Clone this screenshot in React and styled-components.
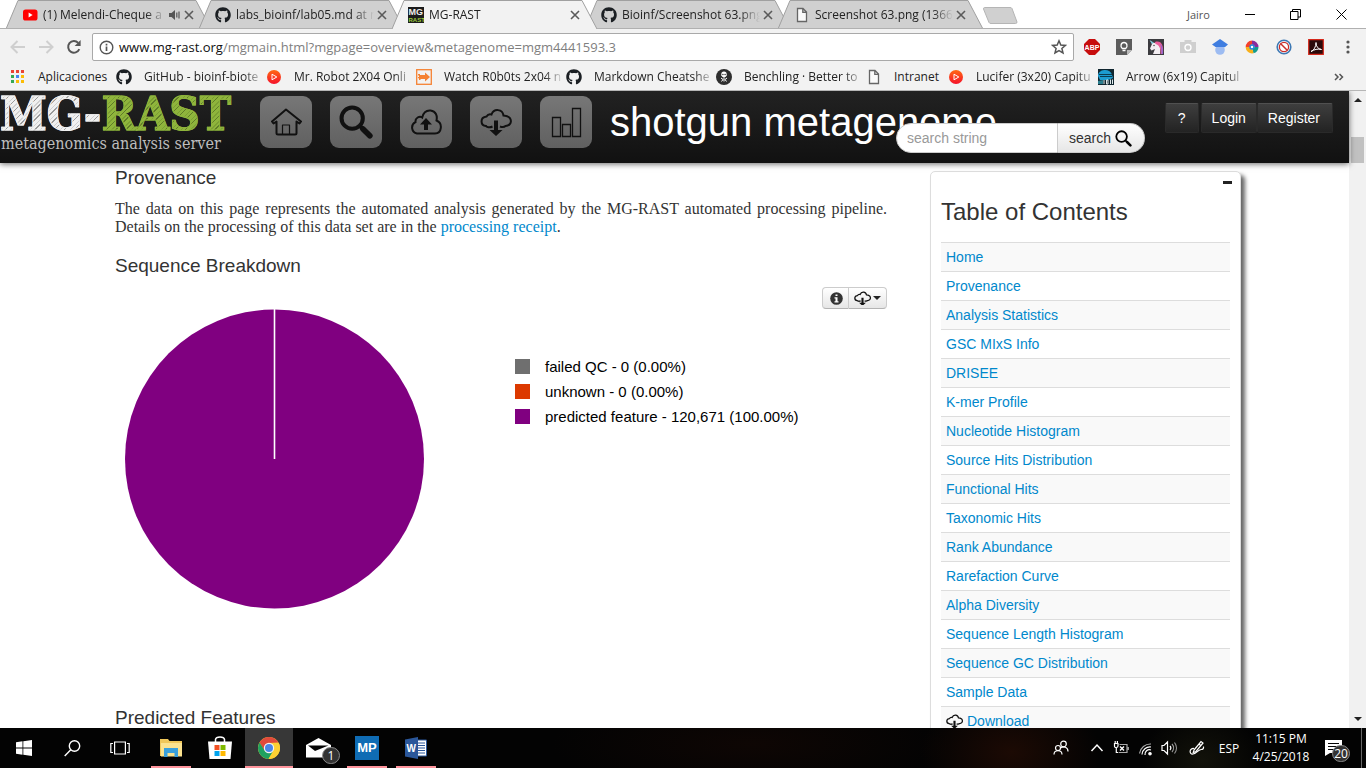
import React from "react";
import styled, { createGlobalStyle, css } from "styled-components";
import { FaGithub } from "react-icons/fa";

const ui = `"Open Sans", "Noto Sans", sans-serif`;
const sans = `"Liberation Sans", Arial, sans-serif`;
const slab = `"DejaVu Serif Condensed", "DejaVu Serif", serif`;

const Global = createGlobalStyle`
  * { box-sizing: border-box; }
  html, body { margin: 0; height: 100%; overflow: hidden; background: #fff; }
  button, input { font: inherit; color: inherit; margin: 0; }
  button { border: 0; padding: 0; background: none; }
  ul { list-style: none; margin: 0; padding: 0; }
  h1, h2, h3, p { margin: 0; font-weight: normal; }
  a { text-decoration: none; }
  svg { display: block; flex: none; }
`;

const Screen = styled.div`
  display: flex;
  flex-direction: column;
  height: 100vh;
  font-family: ${ui};
  font-size: 12px;
`;

/* ---------- browser frame ---------- */

const TabStrip = styled.div`
  display: flex;
  align-items: flex-start;
  height: 29px;
  padding-left: 6px;
  border-bottom: 1px solid #b0b0b0;
  background: #fff;
`;

const TabBox = styled.div`
  position: relative;
  display: flex;
  align-items: center;
  flex: 0 0 205px;
  min-width: 0;
  height: 29px;
  margin-right: -12px;
  padding: 0 17px 0 16px;
  z-index: ${(p) => (p.$active ? 2 : 1)};
`;

const TabShape = styled.svg`
  position: absolute;
  inset: 0;
`;

const TabIcon = styled.span`
  position: relative;
  display: flex;
  width: 16px;
  margin-right: 5px;
`;

const fade = css`
  overflow: hidden;
  white-space: nowrap;
  mask-image: linear-gradient(to right, #000 calc(100% - 20px), transparent);
`;

const TabTitle = styled.span`
  position: relative;
  flex: 1 1 0;
  min-width: 0;
  color: #222;
  line-height: 28px;
  ${fade}
`;

const TabButton = styled.button`
  position: relative;
  display: flex;
  flex: none;
  margin-left: 3px;
  color: #5a5a5a;
`;

const NewTab = styled.button`
  width: 36px;
  margin: 6px 0 0 11px;
`;

const WindowControls = styled.div`
  display: flex;
  align-items: center;
  height: 28px;
  margin-left: auto;
  padding-right: 19px;
  gap: 35px;
`;

const UserName = styled.span`
  font-size: 11px;
  color: #555;
`;

const ToolBar = styled.div`
  display: flex;
  align-items: center;
  height: 36px;
  padding: 0 10px;
  background: #f2f2f2;
`;

const NavButtons = styled.div`
  display: flex;
  gap: 12px;
  margin-right: 10px;
`;

const NavButton = styled.button`
  display: flex;
  width: 16px;
  color: ${(p) => (p.$off ? "#cfcfcf" : "#555")};
`;

const Omnibox = styled.div`
  display: flex;
  align-items: center;
  flex: 1;
  height: 28px;
  padding: 0 6px;
  margin-right: 10px;
  border: 1px solid #a9a9a9;
  border-radius: 2px;
  background: #fff;
`;

const Url = styled.div`
  flex: 1;
  margin-left: 5px;
  font-size: 13px;
  line-height: 24px;
  color: #808080;
  b { font-weight: normal; color: #111; }
`;

const Extensions = styled.div`
  display: flex;
  gap: 16px;
`;

const Bookmarks = styled.nav`
  display: flex;
  align-items: center;
  height: 26px;
  padding: 0 22px 2px 10px;
  gap: 12px;
  border-bottom: 1px solid #b6b6b6;
  background: #f2f2f2;
`;

const Bookmark = styled.a`
  display: flex;
  align-items: center;
  gap: 12px;
  color: #222;
  line-height: 20px;
`;

const longLabel = css`
  width: 120px;
  margin-right: -10px;
  ${fade}
`;

const BookmarkLabel = styled.span`
  width: ${(p) => p.$width}px;
  white-space: nowrap;
  ${(p) => !p.$width && longLabel}
`;

const More = styled.button`
  margin-left: auto;
  display: flex;
`;

/* ---------- web page ---------- */

const Viewport = styled.div`
  display: flex;
  flex: 1;
  min-height: 0;
  overflow: hidden;
`;

const Page = styled.div`
  display: flex;
  flex-direction: column;
  flex: 1;
  min-width: 0;
  font-family: ${sans};
  font-size: 14px;
  color: #333;
`;

const Header = styled.header`
  position: relative;
  z-index: 2;
  display: flex;
  flex: none;
  height: 72px;
  padding-right: 16px;
  background: linear-gradient(#222, #111);
  box-shadow: 0 1px 6px rgba(0, 0, 0, 0.6);
`;

const Logo = styled.a`
  display: flex;
  flex-direction: column;
  flex: 0 0 260px;
  font-family: ${slab};
  white-space: nowrap;
`;

const LogoName = styled.span`
  font-size: 47px;
  font-weight: bold;
  line-height: 46px;
`;

const LogoPart = styled.span`
  color: transparent;
  -webkit-text-stroke: 1px ${(p) => p.$light};
  background: repeating-linear-gradient(
    135deg,
    ${(p) => p.$light} 0 3px,
    ${(p) => p.$mid} 3px 4px,
    ${(p) => p.$light} 4px 6px,
    ${(p) => p.$dark} 6px 7px
  );
  background-clip: text;
  -webkit-background-clip: text;
`;

const LogoTag = styled.span`
  padding-left: 1px;
  font-size: 16px;
  line-height: 14px;
  color: #bdbdbd;
`;

const MainNav = styled.nav`
  display: flex;
  gap: 18px;
  padding-top: 5px;
`;

const IconButton = styled.button`
  display: flex;
  align-items: center;
  justify-content: center;
  width: 52px;
  height: 52px;
  border-radius: 9px;
  background: linear-gradient(#777, #606060);
  color: #111;
`;

const Title = styled.h1`
  margin-left: 18px;
  font-size: 40px;
  line-height: 62px;
  color: #fff;
  white-space: nowrap;
`;

const Search = styled.form`
  position: absolute;
  right: 204px;
  top: 32px;
  display: flex;
  width: 249px;
  height: 30px;
`;

const SearchInput = styled.input`
  flex: 1;
  min-width: 0;
  padding: 0 10px;
  border: 1px solid #ccc;
  border-radius: 15px 0 0 15px;
  background: #fff;
  outline: 0;
  &::placeholder { color: #999; opacity: 1; }
`;

const SearchButton = styled.button`
  display: flex;
  align-items: center;
  gap: 4px;
  padding: 0 12px 0 11px;
  border: 1px solid #ccc;
  border-left: 0;
  border-radius: 0 15px 15px 0;
  background: linear-gradient(#fff, #e6e6e6);
  svg { color: #000; }
`;

const Account = styled.div`
  display: flex;
  height: 30px;
  margin: 12px 0 0 auto;
`;

const AccountButton = styled.button`
  padding: 0 10px;
  border: 1px solid #2a2a2a;
  border-top-color: #505050;
  border-radius: 2px;
  background: linear-gradient(#3e3e3e, #232323);
  color: #fff;
  &:first-child { padding: 0 12px; margin-right: 2px; }
  &:last-child { padding-right: 12px; }
`;

const Content = styled.div`
  display: grid;
  grid-template-columns: minmax(0, 1fr) 311px;
  gap: 43px;
  flex: 1;
  min-height: 0;
  padding: 0 108px 0 115px;
  overflow: hidden;
`;

const Article = styled.main`
  padding-top: 5px;
`;

const SectionTitle = styled.h2`
  font-size: 19px;
  line-height: 20px;
`;

const Paragraph = styled.p`
  margin: 12px 0 20px;
  font-family: "Liberation Serif", "Times New Roman", serif;
  font-size: 16px;
  line-height: 18px;
  text-align: justify;
`;

const Link = styled.a`
  color: #0088cc;
`;

const ChartTools = styled.div`
  display: flex;
  justify-content: flex-end;
  margin-top: 11px;
`;

const ToolButton = styled.button`
  display: flex;
  align-items: center;
  gap: 2px;
  height: 22px;
  padding: 0 5px 0 ${(p) => (p.$last ? 5 : 7)}px;
  border: 1px solid #ccc;
  border-left-width: ${(p) => (p.$last ? 0 : 1)}px;
  border-bottom-color: #b3b3b3;
  border-radius: ${(p) => (p.$last ? "0 4px 4px 0" : "4px 0 0 4px")};
  background: linear-gradient(#fff, #e6e6e6);
  color: #111;
`;

const Chart = styled.section`
  display: flex;
  gap: 90px;
  min-height: 399px;
  padding-left: 10px;
`;

const Legend = styled.ul`
  padding-top: 45px;
  font-size: 15px;
  line-height: 25px;
  color: #000;
`;

const LegendItem = styled.li`
  display: flex;
  align-items: center;
  gap: 15px;
  &::before {
    content: "";
    width: 15px;
    height: 15px;
    background: ${(p) => p.$color};
  }
`;

const Toc = styled.aside`
  margin-top: 8px;
  padding: 0 10px 10px;
  height: max-content;
  border: 1px solid #ddd;
  border-radius: 5px;
  background: #fff;
  box-shadow: 4px 4px 4px #666;
`;

const Collapse = styled.button`
  display: block;
  width: 9px;
  height: 3px;
  margin: 9px -2px 0 auto;
  background: #222;
`;

const TocTitle = styled.h3`
  padding: 8px 0 10px;
  font-size: 24px;
  line-height: 40px;
`;

const TocItem = styled.li`
  border-top: 1px solid #ddd;
  padding: 4px 5px;
  line-height: 20px;
  &:nth-child(odd) { background: #f9f9f9; }
  a { display: flex; align-items: center; gap: 4px; }
  svg { color: #111; }
`;

const ScrollTrack = styled.div`
  display: flex;
  flex-direction: column;
  align-items: center;
  width: 17px;
  padding: 7px 0;
  background: #f1f1f1;
`;

const ScrollThumb = styled.div`
  width: 13px;
  height: 26px;
  margin: 35px 0 auto;
  background: #c1c1c1;
`;

/* ---------- task bar ---------- */

const TaskBar = styled.footer`
  display: flex;
  flex: none;
  height: 40px;
  color: #fff;
  background:
    radial-gradient(ellipse 90px 60px at 74% 60%, #1c0a04, transparent),
    radial-gradient(ellipse 60px 50px at 88% 80%, #12120a, transparent),
    radial-gradient(ellipse 200px 50px at 55% 40%, #0e0604, transparent),
    #030303;
`;

const TaskGroup = styled.div`
  display: flex;
  gap: ${(p) => p.$gap || 0}px;
  margin-left: ${(p) => p.$start || 0}px;
`;

const TaskButton = styled.button`
  position: relative;
  display: flex;
  align-items: center;
  justify-content: center;
  width: 48px;
  height: 40px;
  background: ${(p) => (p.$active ? "#373737" : "none")};
  &::after {
    content: "";
    position: absolute;
    bottom: 0;
    left: ${(p) => (p.$active ? 0 : 4)}px;
    right: ${(p) => (p.$active ? 0 : 4)}px;
    height: 2px;
    background: ${(p) => (p.$open || p.$active ? "#ff949c" : "none")};
  }
`;

const Badge = styled.span`
  position: absolute;
  left: ${(p) => p.$left}px;
  top: ${(p) => p.$top}px;
  min-width: 18px;
  height: 17px;
  border: 1px solid #8a8a8a;
  border-radius: 9px;
  background: #333;
  font-size: 12px;
  line-height: 15px;
  text-align: center;
`;

const Tile = styled.span`
  width: 24px;
  height: 24px;
  background: #0f6cb4;
  font: bold 13px/24px ${sans};
`;

const Tray = styled.div`
  display: flex;
  align-items: center;
  margin-left: auto;
`;

const TrayButton = styled.button`
  display: flex;
  justify-content: center;
  width: 24px;
  margin-right: ${(p) => p.$after || 0}px;
`;

const Clock = styled.time`
  width: 64px;
  margin: 0 3px 0 8px;
  text-align: center;
  line-height: 18px;
  white-space: nowrap;
`;

const Notifications = styled.button`
  position: relative;
  display: flex;
  align-items: flex-start;
  width: 46px;
  height: 40px;
  padding: 12px 0 0 9px;
  border-right: 1px solid #666;
  margin-right: 4px;
`;

/* ---------- drawings ---------- */

const CloseX = () => (
  <svg width="10" height="10" viewBox="0 0 10 10" stroke="currentColor" strokeWidth="1.6">
    <path d="M1 1l8 8M9 1l-8 8" />
  </svg>
);
const YouTube = () => (
  <svg width="16" height="16" viewBox="0 0 16 16">
    <rect x="1" y="2.5" width="14.5" height="11" rx="2.6" fill="#f00" />
    <path d="M6.6 5.6v4.8l4-2.4z" fill="#fff" />
  </svg>
);
const PageIcon = () => (
  <svg width="16" height="16" viewBox="0 0 16 16" fill="#fafafa" stroke="#666" strokeWidth="1.3">
    <path d="M3.5 1.5h5.5l3.5 3.6v9.4h-9zM8.8 1.5v3.8h3.7" />
  </svg>
);
const RastIcon = () => (
  <svg width="16" height="16" viewBox="0 0 16 16" fontFamily="Liberation Sans" fontWeight="bold">
    <rect width="16" height="16" fill="#1b1b1b" />
    <text x="0.5" y="8" fontSize="9" fill="#eee">MG</text>
    <text x="0.5" y="15" fontSize="6" fill="#9aca3c">RAST</text>
  </svg>
);
const Apps = () => (
  <svg width="16" height="16" viewBox="0 0 16 16">
    {["#ea4335", "#ea4335", "#ea4335", "#34a853", "#4285f4", "#fbbc05", "#34a853", "#fbbc05", "#fbbc05"].map((c, i) => (
      <rect key={i} x={1 + (i % 3) * 5} y={1 + Math.floor(i / 3) * 5} width="3" height="3" fill={c} />
    ))}
  </svg>
);
const PlayDot = () => (
  <svg width="16" height="16" viewBox="0 0 16 16">
    <defs>
      <linearGradient id="dot" x1="0" y1="0" x2="0" y2="1">
        <stop stopColor="#ff6a13" />
        <stop offset="1" stopColor="#f5112b" />
      </linearGradient>
    </defs>
    <circle cx="8" cy="8" r="7" fill="url(#dot)" />
    <path d="M6 5.2v5.6L10.8 8z" fill="none" stroke="#fff" strokeWidth="1" />
  </svg>
);
const OrangeArrow = () => (
  <svg width="16" height="16" viewBox="0 0 16 16">
    <rect x=".7" y=".7" width="14.6" height="14.6" fill="none" stroke="#f58233" strokeWidth="1.3" />
    <path d="M2 5h2v1h5V3.500L14 8l-5 4.500V10H4.500v1H3V9.200H2V8h1V6.500H2z" fill="#f58233" />
  </svg>
);
const Benchling = () => (
  <svg width="16" height="16" viewBox="0 0 16 16">
    <circle cx="8" cy="8" r="8" fill="#2e2e2e" />
    <path d="M5.300 5a2.700 2.500 0 0 1 5.400 0v1.500L9.500 8h-3L5.300 6.500z" fill="#fff" />
    <path d="M5 9l2 1.500-1.500 2M11 9l-2 1.500 1.500 2M8 8v4.500" stroke="#fff" fill="none" />
    <circle cx="6.900" cy="5.500" r=".7" fill="#2e2e2e" />
    <circle cx="9.100" cy="5.500" r=".7" fill="#2e2e2e" />
  </svg>
);
const ArrowShow = () => (
  <svg width="16" height="16" viewBox="0 0 16 16">
    <rect width="16" height="16" fill="#10262f" />
    <path d="M0 7a7 5.500 0 0 1 14-1l1 3-5 2H2z" fill="#1c9cd0" />
    <path d="M1 5.500h13M2 7.500h12" stroke="#0a3c50" />
    <path d="M0 12l5-1v4H0z" fill="#2b7f90" />
    <path d="M6 11v4M8.500 11v4h1.500v-4H8.500M12.500 10.500v4.500M14.500 10.500v4.500" fill="none" stroke="#dfe8ea" />
  </svg>
);
const Back = ({ flip }) => (
  <svg width="16" height="16" viewBox="0 0 16 16" fill="none" stroke="currentColor" strokeWidth="2">
    <path d={flip ? "M1 8h13M8.500 2l6 6-6 6" : "M15 8H2M7.500 2l-6 6 6 6"} />
  </svg>
);
const Reload = () => (
  <svg width="16" height="16" viewBox="0 0 16 16" fill="none" stroke="currentColor" strokeWidth="2">
    <path d="M13.300 10.200A5.800 5.800 0 1 1 12.200 3.900" />
    <path d="M14.600 1v6H8.600z" fill="currentColor" stroke="none" />
  </svg>
);
const InfoRing = () => (
  <svg width="15" height="15" viewBox="0 0 15 15" fill="none" stroke="#555" strokeWidth="1.400">
    <circle cx="7.500" cy="7.500" r="6.300" />
    <path d="M7.500 6.500v4.500M7.500 3.800v1.600" strokeWidth="1.700" />
  </svg>
);
const Star = () => (
  <svg width="16" height="16" viewBox="0 0 16 16" fill="none" stroke="#555" strokeWidth="1.500">
    <path d="M8 1.800l1.800 4.200 4.600.4-3.500 3 1.100 4.500L8 11.500l-4 2.400 1.100-4.500-3.500-3 4.600-.4z" />
  </svg>
);
const extIcons = [
  <g key="a"><path d="M5 0h6l5 5v6l-5 5H5l-5-5V5z" fill="#c70d0d" /><text x="8" y="10.700" fontSize="7" fontWeight="bold" fontFamily="Liberation Sans" textAnchor="middle" fill="#fff">ABP</text></g>,
  <g key="b"><path d="M0 0h16v11l-5 5H0z" fill="#5c5c5c" /><path d="M11 16v-5h5z" fill="#bbb" /><path d="M6.300 9.500C4 7.500 4.800 3.500 8 3.500s4 4 1.700 6z" fill="none" stroke="#fff" strokeWidth="1.300" /><path d="M6.500 11.500h3" stroke="#fff" strokeWidth="1.500" /></g>,
  <g key="c"><path d="M0 0h16v16H0z" fill="#3b3b3f" /><path d="M2 1.500l4 2.500c4-2 7 1 6 11H5l2-5-3.500 1.500-1.500-2L4 5z" fill="#f3eef2" /><path d="M7 3c6-2 9 3 8 12h-2.500c.5-5-1-9-5-10z" fill="#ec5d9a" /><path d="M12 5c3 2 3 6 3 10h-1.500c0-4 0-7-1.500-10z" fill="#8c6bd0" /><path d="M1.500 1l4 2.500L4.200 5z" fill="#6cc5d8" /><circle cx="6" cy="6.500" r=".7" fill="#333" /></g>,
  <g key="d"><path d="M0 3h4.500V1h7v2H16v11H0z" fill="#cfcfcf" /><circle cx="8" cy="8.500" r="3" fill="none" stroke="#fff" strokeWidth="1.400" /></g>,
  <g key="e"><circle cx="8" cy="11" r="4.800" fill="#9dbcf2" /><path d="M8 0l8 5.500-3.500 3v-.5H3.500L0 5.500z" fill="#3f7de0" /></g>,
  <g key="f" fill="none" strokeWidth="4"><path d="M3.700 8A4.500 4.500 0 0 1 8 3.500" stroke="#f4402c" /><path d="M8 3.500A4.500 4.500 0 0 1 12.500 8" stroke="#8b2b9b" /><path d="M12.500 8A4.500 4.500 0 0 1 9 12.300" stroke="#139c8e" /><path d="M9 12.300A4.500 4.500 0 0 1 3.600 8" stroke="#f8b01a" /><circle cx="8" cy="8" r="2" fill="#fff" stroke="#2384d6" strokeWidth="1.500" /></g>,
  <g key="g"><circle cx="8" cy="8" r="6.800" fill="#fff" stroke="#3c78b4" strokeWidth="1.600" /><circle cx="8" cy="8" r="4.600" fill="none" stroke="#c9302c" strokeWidth="1.300" /><path d="M4.500 4.500l7 7" stroke="#c9302c" strokeWidth="1.500" /></g>,
  <g key="h"><path d="M.7.700h14.600v14.600H.7z" fill="#2b0a0a" stroke="#d5281b" strokeWidth="1.200" /><path d="M3 12.500c3-1 5-5 5-9 0 4 2 6.500 5.500 7-4-1-7 0-10.500 2z" fill="none" stroke="#fff" strokeWidth="1" /></g>,
];
const Speaker = () => (
  <svg width="12" height="12" viewBox="0 0 12 12" fill="#555">
    <path d="M0 4h2.500L6 1v10L2.500 8H0z" />
    <path d="M7.800 3.500v5M10 2.500v7" stroke="#555" strokeWidth="1.200" />
  </svg>
);
const Magnifier = ({ size, width = 1.6 }) => (
  <svg width={size} height={size} viewBox="0 0 16 16" fill="none" stroke="currentColor">
    <circle cx="6.200" cy="6.200" r="5" strokeWidth={width} />
    <path d="M10 10l1.500 1.500" strokeWidth={width} />
    <path d="M11.300 11.300l3.200 3.200" strokeWidth={width * 1.4} strokeLinecap="round" />
  </svg>
);
const House = () => (
  <svg width="32" height="32" viewBox="0 0 32 32" fill="none" stroke="currentColor" strokeWidth="2" strokeLinejoin="round">
    <path d="M16 3.500L2 15.500l1.500 2L6.500 15.500V27q0 1.500 1.500 1.500h17q1.500 0 1.500-1.500V15.500l3 2 1.500-2z" />
    <path d="M12.500 28v-9h7v9" strokeWidth="1.200" />
  </svg>
);
const CloudUp = () => (
  <svg width="32" height="26" viewBox="0 0 32 26" fill="none" stroke="currentColor" strokeWidth="2">
    <path d="M7 24.500A6 6 0 0 1 5.500 13.200C5 9 9.500 6.500 12.200 8.500 13.500 3 17 1.200 20.500 1.500 26 2 27.500 7 26.500 11.500 33 14 32 24.500 25 24.500z" />
    <path d="M16 9l6 6.500h-4V21h-4v-5.500h-4z" fill="currentColor" stroke="none" />
  </svg>
);
const CloudDown = ({ size = 32, width = 2 }) => (
  <svg width={size} height={(size * 28) / 32} viewBox="0 0 32 28" fill="none" stroke="currentColor" strokeWidth={width}>
    <path d="M12.500 18.500c-3 1.500-6 .5-6.500-.5-5.500-.5-6.500-8.500.5-9.500C8 6 10 6 11.500 6.500 14 0 22.500 1 23.500 7.500 33 8 33 17.500 25.500 18c-1.500 1.500-3 1.500-5.500.5" />
    <path d="M14 12.500h4V22h4.500L16 28l-6.500-6H14z" fill="currentColor" stroke="none" />
  </svg>
);
const Bars = () => (
  <svg width="32" height="32" viewBox="0 0 32 32" fill="none" stroke="currentColor" strokeWidth="1.300">
    <path d="M2.500 11.500h8v19h-8zM12.500 18.500h8v12h-8zM22.500 2.500h8v28h-8z" />
  </svg>
);
const InfoDot = () => (
  <svg width="13" height="13" viewBox="0 0 13 13">
    <circle cx="6.500" cy="6.500" r="6.300" fill="#333" />
    <path d="M5.500 2.500h2v1.600h-2zM4.500 5.200h3v4h1v1.200h-4V9.200h1V6.400h-1z" fill="#fff" />
  </svg>
);
const Caret = ({ up, width = 8 }) => (
  <svg width={width} height={width / 2} viewBox="0 0 8 4">
    <path d={up ? "M0 4l4-4 4 4z" : "M0 0l4 4 4-4z"} fill="#222" />
  </svg>
);
const Pie = () => (
  <svg width="300" height="300" viewBox="0 0 300 300">
    <circle cx="149.500" cy="150" r="149.500" fill="#800080" />
    <path d="M149.500 150V0" stroke="#fff" strokeWidth="1.600" />
  </svg>
);
const Win = () => (
  <svg width="16" height="16" viewBox="0 0 16 16" fill="#fff">
    <path d="M0 2.200L6.500 1.300v6.200H0zM7.300 1.200L16 0v7.500H7.300zM0 8.400h6.500v6.300L0 13.800zM7.300 8.400H16V16l-8.700-1.200z" />
  </svg>
);
const TaskSearch = () => (
  <svg width="17" height="17" viewBox="0 0 17 17" fill="none" stroke="#fff" strokeWidth="1.400">
    <circle cx="10.500" cy="6" r="5.200" />
    <path d="M6.800 9.700L.7 16" />
  </svg>
);
const TaskView = () => (
  <svg width="20" height="14" viewBox="0 0 20 14" fill="none" stroke="#fff" strokeWidth="1.200">
    <path d="M4.600 1h10.800v12H4.600zM3 2.500H.8v9H3M17 2.500h2.200v9H17" />
  </svg>
);
const Folder = () => (
  <svg width="22" height="20" viewBox="0 0 22 20">
    <path d="M0 1h8l1.500 2H22v15H0z" fill="#f0c75a" />
    <path d="M1 5h21v13.500H1z" fill="#fbe28f" />
    <path d="M4 10h14v9h-3.500v-4h-7v4H4z" fill="#3aa0dc" />
  </svg>
);
const Store = () => (
  <svg width="24" height="24" viewBox="0 0 24 24">
    <path d="M7.500 6V3.500Q8 1 12 1t4.500 2.500V6" fill="none" stroke="#fff" strokeWidth="1.500" />
    <path d="M0 5.500h24L22.500 23h-21z" fill="#fff" />
    <path d="M6.500 9h5v5h-5z" fill="#f25022" /><path d="M12.500 9h5v5h-5z" fill="#7fba00" />
    <path d="M6.500 15h5v5h-5z" fill="#00a4ef" /><path d="M12.500 15h5v5h-5z" fill="#ffb900" />
  </svg>
);
const Chrome = () => (
  <svg width="22" height="22" viewBox="0 0 22 22">
    <circle cx="11" cy="11" r="11" fill="#fdd033" />
    <path d="M1.500 5.500A11 11 0 0 1 20.500 5.500L11 6 6.500 14z" fill="#e04a3c" />
    <path d="M1.500 5.500L6.700 13.500l8.500.500-4.700 8A11 11 0 0 1 1.500 5.500z" fill="#1fa160" />
    <path d="M11 6h9.800a11 11 0 0 1-10.300 16l5.200-8.500z" fill="#fdd033" />
    <circle cx="11" cy="11" r="5.200" fill="#f4f4f4" />
    <circle cx="11" cy="11" r="4" fill="#4a86e8" />
  </svg>
);
const Mail = () => (
  <svg width="25" height="20" viewBox="0 0 25 20" fill="#fff">
    <path d="M0 7L12.500 0 25 7v12.500H0z" />
    <path d="M2 7.500h20.500L9 13z" fill="#050505" />
  </svg>
);
const Word = () => (
  <svg width="22" height="22" viewBox="0 0 22 22">
    <path d="M12 3h9.500v16H12z" fill="#fff" stroke="#2b579a" />
    <path d="M13 6h7M13 8.500h7M13 11h7M13 13.500h7M13 16h7" stroke="#2b579a" strokeWidth="1.200" />
    <path d="M0 2.500L13 0v22L0 19.500z" fill="#2b579a" />
    <text x="6.300" y="15" fontSize="10" fontWeight="bold" fontFamily="Liberation Sans" textAnchor="middle" fill="#fff">W</text>
  </svg>
);
const trayIcons = {
  people: <g><circle cx="10.500" cy="4" r="2.800" /><circle cx="5" cy="8" r="2.500" /><path d="M1 14.500c0-5 8-5 8 0M7.500 8c3-2 7.500-1 7.500 3.500" /></g>,
  up: <path d="M2.500 11L8 5l5.500 6" strokeWidth="1.500" />,
  battery: <g><path d="M1.500 3.500h3.500v2.500q0 1.500-1.800 1.500T1.500 6zM2.200 1v2.500M4.400 1v2.500M3.300 7.500V12.500h2" /><path d="M6.500 4.500h7.500v8H6M15.300 7v3" stroke="#aaa" /><path d="M7 6.500l4 4M11 6.500l-4 4" strokeWidth="1.400" /></g>,
  wifi: <g><path d="M8 15A4.500 4.500 0 0 1 14 10M5 14.500A8 8 0 0 1 14 7" /><path d="M2.500 13.500A11 11 0 0 1 14 4" stroke="#aaa" /><circle cx="13" cy="13.700" r="1.200" fill="#fff" /></g>,
  volume: <g><path d="M1 5.500h2L6.500 2v12L3 10.500H1zM9 6a3 3 0 0 1 0 4" /><path d="M11 4a6 6 0 0 1 0 8M13.500 2.500a9 9 0 0 1 0 11" stroke="#999" /></g>,
  pen: <g><path d="M5 10l7-8.500 2 1.500-7 8.500-2.800 1zM10 4l2 1.700" /><path d="M5 8.500C0 8 0 14.500 4 14c3-.5 5-4 8-4.500q3 0 2.500-3" /></g>,
};
const TrayIcon = ({ name }) => (
  <svg width="16" height="16" viewBox="0 0 16 16" fill="none" stroke="#fff" strokeWidth="1.200">{trayIcons[name]}</svg>
);

/* ---------- data ---------- */

const tabs = [
  { title: "(1) Melendi-Cheque a", icon: <YouTube />, audio: true },
  { title: "labs_bioinf/lab05.md at m", icon: <FaGithub size={16} color="#1b1f23" /> },
  { title: "MG-RAST", icon: <RastIcon />, active: true },
  { title: "Bioinf/Screenshot 63.png", icon: <FaGithub size={16} color="#1b1f23" /> },
  { title: "Screenshot 63.png (1366", icon: <PageIcon /> },
];
const bookmarks = [
  ["Aplicaciones", <Apps />, 66],
  ["GitHub - bioinf-biote", <FaGithub size={16} color="#1b1f23" />],
  ["Mr. Robot 2X04 Onli", <PlayDot />],
  ["Watch R0b0ts 2x04 n", <OrangeArrow />],
  ["Markdown Cheatshe", <FaGithub size={16} color="#1b1f23" />],
  ["Benchling · Better to", <Benchling />],
  ["Intranet", <PageIcon />, 42],
  ["Lucifer (3x20) Capitu", <PlayDot />],
  ["Arrow (6x19) Capitul", <ArrowShow />],
];
const toc = [
  "Home", "Provenance", "Analysis Statistics", "GSC MIxS Info", "DRISEE", "K-mer Profile",
  "Nucleotide Histogram", "Source Hits Distribution", "Functional Hits", "Taxonomic Hits",
  "Rank Abundance", "Rarefaction Curve", "Alpha Diversity", "Sequence Length Histogram",
  "Sequence GC Distribution", "Sample Data",
];

export default function App() {
  return (
    <Screen>
      <Global />
      <TabStrip>
        {tabs.map((t) => (
          <TabBox key={t.title} $active={t.active}>
            <TabShape width="205" height="29" viewBox="0 0 205 29">
              <path d="M0 29L12 .5H190L205 29" fill={t.active ? "#f2f2f2" : "#d0d0d0"} stroke="#a0a0a0" />
              {!t.active && <path d="M0 28.500H205" stroke="#b0b0b0" />}
            </TabShape>
            <TabIcon>{t.icon}</TabIcon>
            <TabTitle>{t.title}</TabTitle>
            {t.audio && <TabButton aria-label="Mute tab"><Speaker /></TabButton>}
            <TabButton aria-label="Close tab"><CloseX /></TabButton>
          </TabBox>
        ))}
        <NewTab aria-label="New tab">
          <svg width="36" height="19" viewBox="0 0 36 19">
            <path d="M2.500 1.500H28q1.500 0 2 1l5 13.500q0 1.500-1.500 1.500H9q-1.500 0-2-1L1.500 3q0-1.500 1-1.500z" fill="#d0d0d0" stroke="#b5b5b5" />
          </svg>
        </NewTab>
        <WindowControls>
          <UserName>Jairo</UserName>
          <button aria-label="Minimize"><svg width="10" height="10" viewBox="0 0 10 10" stroke="#000"><path d="M0 5.500h10" /></svg></button>
          <button aria-label="Restore"><svg width="11" height="11" viewBox="0 0 11 11" fill="none" stroke="#000"><path d="M.5 2.500h7.500v8H.5zM2.500 2.500v-2h8v7.500H8" /></svg></button>
          <button aria-label="Close"><svg width="11" height="11" viewBox="0 0 11 11" stroke="#000"><path d="M.5.500l10 10M10.500.500l-10 10" /></svg></button>
        </WindowControls>
      </TabStrip>
      <ToolBar>
        <NavButtons>
          <NavButton $off aria-label="Back"><Back /></NavButton>
          <NavButton $off aria-label="Forward"><Back flip /></NavButton>
          <NavButton aria-label="Reload"><Reload /></NavButton>
        </NavButtons>
        <Omnibox>
          <InfoRing />
          <Url><b>www.mg-rast.org</b>/mgmain.html?mgpage=overview&amp;metagenome=mgm4441593.3</Url>
          <Star />
        </Omnibox>
        <Extensions>
          {extIcons.map((icon, i) => <svg key={i} width="16" height="16" viewBox="0 0 16 16">{icon}</svg>)}
          <svg width="16" height="16" viewBox="0 0 16 16" fill="#555">
            <circle cx="8" cy="3" r="1.600" /><circle cx="8" cy="8" r="1.600" /><circle cx="8" cy="13" r="1.600" />
          </svg>
        </Extensions>
      </ToolBar>
      <Bookmarks>
        {bookmarks.map(([label, icon, width]) => (
          <Bookmark key={label} href="#">
            {icon}
            <BookmarkLabel $width={width}>{label}</BookmarkLabel>
          </Bookmark>
        ))}
        <More aria-label="More bookmarks">
          <svg width="10" height="8" viewBox="0 0 10 8" fill="none" stroke="#555" strokeWidth="1.500"><path d="M1 1l3 3-3 3M5.500 1l3 3-3 3" /></svg>
        </More>
      </Bookmarks>

      <Viewport>
        <Page>
          <Header>
            <Logo href="#">
              <LogoName>
                <LogoPart $light="#f0f0f0" $mid="#d0d0d0" $dark="#9a9a9a">MG-</LogoPart>
                <LogoPart $light="#8fb53c" $mid="#7c9f34" $dark="#5f7c27">RAST</LogoPart>
              </LogoName>
              <LogoTag>metagenomics analysis server</LogoTag>
            </Logo>
            <MainNav>
              <IconButton aria-label="Home"><House /></IconButton>
              <IconButton aria-label="Search"><Magnifier size={34} width={1.9} /></IconButton>
              <IconButton aria-label="Upload"><CloudUp /></IconButton>
              <IconButton aria-label="Download"><CloudDown /></IconButton>
              <IconButton aria-label="Analyze"><Bars /></IconButton>
            </MainNav>
            <Title>shotgun metagenome</Title>
            <Search>
              <SearchInput aria-label="search string" placeholder="search string" />
              <SearchButton type="button">search <Magnifier size={17} width={1.7} /></SearchButton>
            </Search>
            <Account>
              <AccountButton>?</AccountButton>
              <AccountButton>Login</AccountButton>
              <AccountButton>Register</AccountButton>
            </Account>
          </Header>
          <Content>
            <Article>
              <SectionTitle>Provenance</SectionTitle>
              <Paragraph>
                The data on this page represents the automated analysis generated by the MG-RAST automated
                processing pipeline. Details on the processing of this data set are in the{" "}
                <Link href="#">processing receipt</Link>.
              </Paragraph>
              <SectionTitle>Sequence Breakdown</SectionTitle>
              <ChartTools>
                <ToolButton aria-label="Info"><InfoDot /></ToolButton>
                <ToolButton $last aria-label="Download"><CloudDown size={17} width={2.4} /><Caret /></ToolButton>
              </ChartTools>
              <Chart>
                <Pie />
                <Legend>
                  <LegendItem $color="#6f6f6f">failed QC - 0 (0.00%)</LegendItem>
                  <LegendItem $color="#dc3900">unknown - 0 (0.00%)</LegendItem>
                  <LegendItem $color="#800080">predicted feature - 120,671 (100.00%)</LegendItem>
                </Legend>
              </Chart>
              <SectionTitle>Predicted Features</SectionTitle>
            </Article>
            <Toc>
              <Collapse aria-label="Collapse" />
              <TocTitle>Table of Contents</TocTitle>
              <ul>
                {toc.map((item) => <TocItem key={item}><Link href="#">{item}</Link></TocItem>)}
                <TocItem>
                  <Link href="#"><CloudDown size={17} width={2.4} />Download</Link>
                </TocItem>
              </ul>
            </Toc>
          </Content>
        </Page>
        <ScrollTrack>
          <Caret up />
          <ScrollThumb />
          <Caret />
        </ScrollTrack>
      </Viewport>

      <TaskBar>
        <TaskGroup>
          <TaskButton aria-label="Start"><Win /></TaskButton>
          <TaskButton aria-label="Search"><TaskSearch /></TaskButton>
          <TaskButton aria-label="Task view"><TaskView /></TaskButton>
        </TaskGroup>
        <TaskGroup $gap={1} $start={3}>
          <TaskButton $open aria-label="File Explorer"><Folder /></TaskButton>
          <TaskButton aria-label="Store"><Store /></TaskButton>
          <TaskButton $active aria-label="Chrome"><Chrome /></TaskButton>
          <TaskButton aria-label="Mail"><Mail /><Badge $left={28} $top={19}>1</Badge></TaskButton>
          <TaskButton $open><Tile>MP</Tile></TaskButton>
          <TaskButton $open aria-label="Word"><Word /></TaskButton>
        </TaskGroup>
        <Tray>
          <TrayButton $after={12} aria-label="People"><TrayIcon name="people" /></TrayButton>
          <TrayButton aria-label="Show hidden icons"><TrayIcon name="up" /></TrayButton>
          <TrayButton aria-label="Battery"><TrayIcon name="battery" /></TrayButton>
          <TrayButton aria-label="Network"><TrayIcon name="wifi" /></TrayButton>
          <TrayButton $after={4} aria-label="Volume"><TrayIcon name="volume" /></TrayButton>
          <TrayButton $after={8} aria-label="Pen"><TrayIcon name="pen" /></TrayButton>
          <TrayButton>ESP</TrayButton>
          <Clock>11:15 PM<br />4/25/2018</Clock>
          <Notifications aria-label="Notifications">
            <svg width="17" height="17" viewBox="0 0 17 17" fill="#fff">
              <path d="M0 0h17v13H5l-5 3z" />
              <path d="M3 3.500h11M3 6.500h11M3 9.500h7" stroke="#050505" strokeWidth="1.200" />
            </svg>
            <Badge $left={16} $top={17}>20</Badge>
          </Notifications>
        </Tray>
      </TaskBar>
    </Screen>
  );
}
